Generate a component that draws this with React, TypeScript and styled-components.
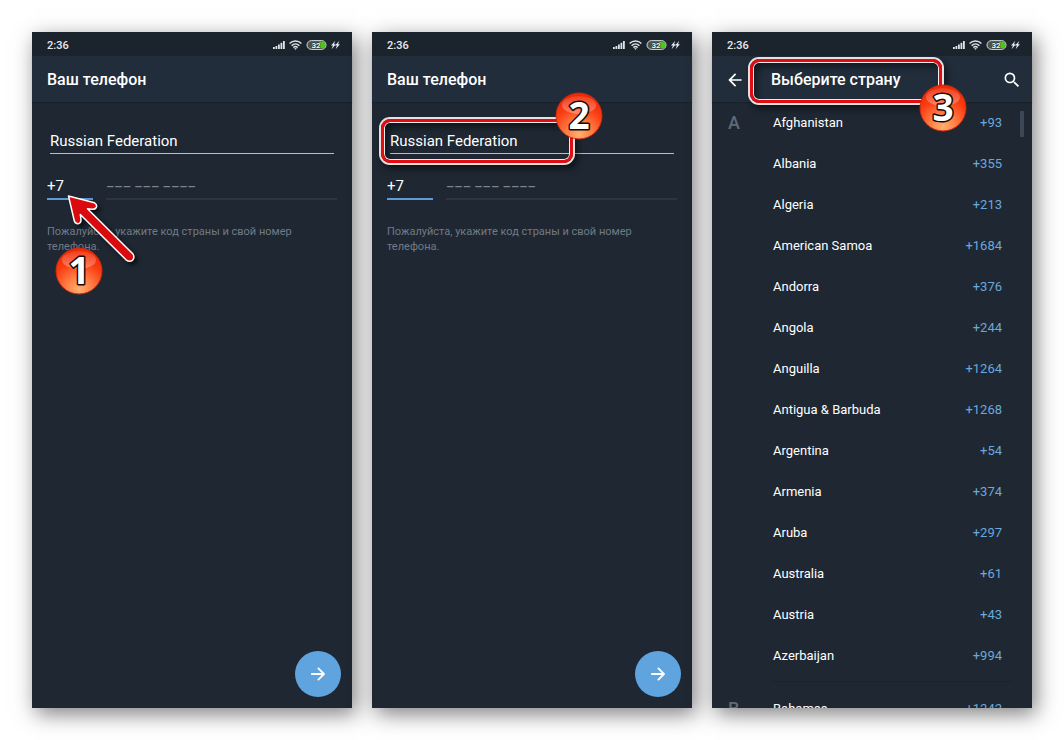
import React from "react";
import styled, { createGlobalStyle } from "styled-components";
import { MdArrowBack, MdSearch } from "react-icons/md";

const GlobalStyle = createGlobalStyle`
  *, *::before, *::after { box-sizing: border-box; }
  body { margin: 0; background: #fff; font-family: Roboto, "Liberation Sans", sans-serif; }
  button, input, select { font: inherit; color: inherit; background: none; border: 0; margin: 0; padding: 0; border-radius: 0; outline: none; }
  button { cursor: pointer; }
`;

const Page = styled.main`
  display: grid;
  grid-template-columns: repeat(3, minmax(0, 1fr));
  gap: 20px;
  height: 100vh;
  padding: 32px;
`;

const Phone = styled.section`
  position: relative;
  display: flex;
  flex-direction: column;
  min-height: 0;
  background: #1e2732;
  color: #fff;
  box-shadow: 4px 6px 20px rgba(0, 0, 0, 0.5);
`;

const StatusBar = styled.div`
  display: flex;
  flex: none;
  align-items: center;
  justify-content: space-between;
  height: 24px;
  padding: 2px 12px 0 15px;
  background: #1b242d;
  color: #e6e9ec;
  font-size: 11px;
  font-weight: 500;
`;

const StatusIcons = styled.div`
  display: flex;
  align-items: center;
  gap: 4px;
`;

const AppBar = styled.header`
  display: flex;
  flex: none;
  align-items: center;
  height: 46px;
  padding: 1px 10px 0 15px;
  background: #212d3b;
  box-shadow: 0 1px 1px rgba(0, 0, 0, 0.15);
`;

const Title = styled.h1<{ $inset?: boolean }>`
  flex: 1;
  margin: 0 0 0 ${(p) => (p.$inset ? "26px" : "0")};
  font-size: 16px;
  font-weight: 500;
  line-height: 20px;
`;

const IconButton = styled.button`
  display: flex;
  align-items: center;
  justify-content: center;
  width: 20px;
  height: 20px;
  margin-left: -2px;
`;

const Form = styled.form`
  display: flex;
  flex: 1;
  flex-direction: column;
  padding: 26px 15px 0;
`;

const CountrySelect = styled.select`
  appearance: none;
  height: 26px;
  margin: 0 3px;
  border-bottom: 1px solid #b9bec3;
  font-size: 15px;
  option { color: #000; }
`;

const PhoneRow = styled.div`
  display: grid;
  grid-template-columns: 46px minmax(0, 1fr);
  gap: 13px;
  margin-top: 20px;
`;

const PhoneInput = styled.input<{ $active?: boolean }>`
  width: 100%;
  height: 26px;
  border-bottom: 2px solid ${(p) => (p.$active ? "#5f9bd6" : "#2c3540")};
  font-size: 15px;
  &::placeholder { color: #7d868f; opacity: 1; font-size: 13px; font-weight: 500; }
`;

const Hint = styled.p`
  margin: 24px 0 0;
  color: #717b86;
  font-size: 11px;
  line-height: 15px;
`;

const NextButton = styled.button`
  display: flex;
  align-items: center;
  justify-content: center;
  align-self: flex-end;
  width: 46px;
  height: 46px;
  margin: auto -4px 11px 0;
  border-radius: 50%;
  background: #5fa3df;
`;

const ListArea = styled.div`
  position: relative;
  flex: 1;
  min-height: 0;
  overflow: hidden;
`;

const ScrollThumb = styled.div`
  position: absolute;
  top: 9px;
  right: 8px;
  width: 4px;
  height: 26px;
  background: #3c4855;
`;

const Group = styled.section`
  display: grid;
  grid-template-columns: 61px minmax(0, 1fr);
  padding-right: 19px;
`;

const Letter = styled.h2`
  margin: 0 0 0 16px;
  color: #5e6a76;
  font-size: 18px;
  font-weight: 500;
  line-height: 41px;
`;

const Countries = styled.ul`
  margin: 0;
  padding: 0;
  list-style: none;
`;

const CountryRow = styled.button`
  display: flex;
  align-items: center;
  justify-content: space-between;
  width: 100%;
  height: 41px;
  padding-right: 11px;
  font-size: 13px;
`;

const DialCode = styled.span`
  color: #6aa9dd;
`;

const Divider = styled.hr`
  height: 1px;
  margin: 5px 20px 6px 59px;
  border: 0;
  background: #1a222c;
`;

const Frame = styled.div<{ $x: number; $y: number; $w: number; $h: number }>`
  position: absolute;
  left: ${(p) => p.$x}px;
  top: ${(p) => p.$y}px;
  width: ${(p) => p.$w}px;
  height: ${(p) => p.$h}px;
  border: 3px solid #e00d12;
  border-radius: 9px;
  box-shadow: 0 0 0 2px #eadfdf, inset 0 0 0 1px #f4ecec, 3px 4px 6px 2px rgba(0, 0, 0, 0.5),
    inset 4px 5px 6px rgba(0, 0, 0, 0.45);
  pointer-events: none;
`;

const BadgeSvg = styled.svg<{ $x: number; $y: number }>`
  position: absolute;
  left: ${(p) => p.$x}px;
  top: ${(p) => p.$y}px;
  pointer-events: none;
`;

const ArrowSvg = styled.svg`
  position: absolute;
  left: 28px;
  top: 156px;
  pointer-events: none;
  filter: drop-shadow(3px 3px 2px rgba(0, 0, 0, 0.6));
`;

function Badge({ n, x, y }: { n: number; x: number; y: number }) {
  const body = `badge-body-${n}`;
  const gloss = `badge-gloss-${n}`;
  return (
    <BadgeSvg $x={x} $y={y} width="48" height="48" viewBox="0 0 48 48">
      <defs>
        <radialGradient id={body} cx="0.5" cy="0.9" r="0.85">
          <stop offset="0" stopColor="#ffb070" />
          <stop offset="0.35" stopColor="#ff7a42" />
          <stop offset="0.7" stopColor="#fb3d12" />
          <stop offset="1" stopColor="#ec2a06" />
        </radialGradient>
        <linearGradient id={gloss} x1="0" y1="0" x2="0" y2="1">
          <stop offset="0" stopColor="#fff" stopOpacity="0.1" />
          <stop offset="1" stopColor="#fff" stopOpacity="0.32" />
        </linearGradient>
      </defs>
      <circle cx="24" cy="24" r="23" fill={`url(#${body})`} stroke="#c92a10" strokeWidth="1" />
      <ellipse cx="24" cy="13" rx="17" ry="9" fill={`url(#${gloss})`} />
      <text
        x="24"
        y="37"
        textAnchor="middle"
        fontFamily='"Noto Sans", "Open Sans", sans-serif'
        fontSize="37"
        fontWeight="700"
        fill="#fff"
        stroke="#150805"
        strokeWidth="3"
        strokeLinejoin="round"
        paintOrder="stroke"
      >
        {n}
      </text>
    </BadgeSvg>
  );
}

function Status() {
  return (
    <StatusBar>
      <span>2:36</span>
      <StatusIcons>
        <svg width="12" height="10" viewBox="0 0 12 10" fill="#dfe3e6">
          <rect x="0" y="7" width="1.8" height="2" />
          <rect x="2.500" y="6" width="1.8" height="3" />
          <rect x="5" y="4.500" width="1.8" height="4.500" />
          <rect x="7.500" y="2.800" width="1.8" height="6.200" />
          <rect x="10" y="1" width="1.8" height="8" />
        </svg>
        <svg width="13" height="10" viewBox="0 0 13 10" fill="none" stroke="#dfe3e6" strokeWidth="1.5">
          <path d="M0.6 3.600C3.900 0.200 9.100 0.200 12.400 3.600" />
          <path d="M2.600 5.700C4.900 3.400 8.100 3.400 10.400 5.700" />
          <path d="M4.400 7.600c1.200-1.200 3-1.200 4.200 0" />
          <path d="M6.500 10L5.100 8.300h2.800z" fill="#dfe3e6" stroke="none" />
        </svg>
        <svg width="21" height="10" viewBox="0 0 21 10">
          <rect x="1" y="0.600" width="19" height="8.800" rx="4.400" fill="#4a5350" stroke="#d4d9dc" strokeWidth="1" />
          <path d="M13 1.800h3a3.200 3.200 0 0 1 0 6.400h-3z" fill="#4cc51c" />
          <text
            x="10"
            y="7.800"
            textAnchor="middle"
            fontSize="8"
            fontWeight="700"
            fill="#f2f4f5"
            stroke="#25302c"
            strokeWidth="1"
            paintOrder="stroke"
          >
            32
          </text>
        </svg>
        <svg width="9" height="10" viewBox="0 0 9 10" fill="#e6e9ec">
          <path d="M4.300 0.800L0 5.600h1.900L0.600 9.200 4.900 4.200H3z" />
          <path d="M8.300 0.800L4 5.600h1.900L4.600 9.200 8.900 4.200H7z" />
        </svg>
      </StatusIcons>
    </StatusBar>
  );
}

function LoginPhone({ children }: { children?: React.ReactNode }) {
  return (
    <Phone>
      <Status />
      <AppBar>
        <Title>Ваш телефон</Title>
      </AppBar>
      <Form onSubmit={(e) => e.preventDefault()}>
        <CountrySelect aria-label="Страна" defaultValue="ru">
          <option value="ru">Russian Federation</option>
        </CountrySelect>
        <PhoneRow>
          <PhoneInput $active aria-label="Код страны" defaultValue="+7" />
          <PhoneInput type="tel" aria-label="Номер телефона" placeholder="––– ––– ––––" />
        </PhoneRow>
        <Hint>Пожалуйста, укажите код страны и свой номер телефона.</Hint>
        <NextButton type="submit" aria-label="Далее">
          <svg
            width="14"
            height="14"
            viewBox="0 0 14 14"
            fill="none"
            stroke="#fff"
            strokeWidth="1.8"
            strokeLinecap="round"
            strokeLinejoin="round"
          >
            <path d="M0.800 7h12M7.400 1.400L13 7l-5.600 5.600" />
          </svg>
        </NextButton>
      </Form>
      {children}
    </Phone>
  );
}

const GROUPS: { letter: string; items: [string, string][] }[] = [
  {
    letter: "A",
    items: [
      ["Afghanistan", "+93"],
      ["Albania", "+355"],
      ["Algeria", "+213"],
      ["American Samoa", "+1684"],
      ["Andorra", "+376"],
      ["Angola", "+244"],
      ["Anguilla", "+1264"],
      ["Antigua & Barbuda", "+1268"],
      ["Argentina", "+54"],
      ["Armenia", "+374"],
      ["Aruba", "+297"],
      ["Australia", "+61"],
      ["Austria", "+43"],
      ["Azerbaijan", "+994"],
    ],
  },
  { letter: "B", items: [["Bahamas", "+1242"]] },
];

export default function App() {
  return (
    <>
      <GlobalStyle />
      <Page>
        <LoginPhone>
          <ArrowSvg width="84" height="84" viewBox="60 188 84 84">
            <path
              d="M68.500 196L94.500 202.800Q97.500 204.500 96.300 207.500Q95 209.600 92 209.300L87.500 208.800L133 254Q135 257.500 132.500 260.300Q129.500 262.500 126 259.800L80.300 214.500L81 219.500Q81 223.500 78 223.700Q75 223.700 74.200 220.500Z"
              fill="#da0a0e"
              stroke="#fff"
              strokeWidth="1.5"
              strokeLinejoin="round"
            />
          </ArrowSvg>
          <Badge n={1} x={23} y={215} />
        </LoginPhone>
        <LoginPhone>
          <Frame $x={9} $y={87} $w={192} $h={44} />
          <Badge n={2} x={183} y={60} />
        </LoginPhone>
        <Phone>
          <Status />
          <AppBar>
            <IconButton aria-label="Назад">
              <MdArrowBack size={20} />
            </IconButton>
            <Title $inset>Выберите страну</Title>
            <IconButton aria-label="Поиск">
              <MdSearch size={20} />
            </IconButton>
          </AppBar>
          <ListArea>
            {GROUPS.map((g, i) => (
              <React.Fragment key={g.letter}>
                {i > 0 && <Divider />}
                <Group>
                  <Letter>{g.letter}</Letter>
                  <Countries>
                    {g.items.map(([name, code]) => (
                      <li key={name}>
                        <CountryRow>
                          <span>{name}</span>
                          <DialCode>{code}</DialCode>
                        </CountryRow>
                      </li>
                    ))}
                  </Countries>
                </Group>
              </React.Fragment>
            ))}
            <ScrollThumb />
          </ListArea>
          <Frame $x={38} $y={27} $w={192} $h={44} />
          <Badge n={3} x={207} y={52} />
        </Phone>
      </Page>
    </>
  );
}
